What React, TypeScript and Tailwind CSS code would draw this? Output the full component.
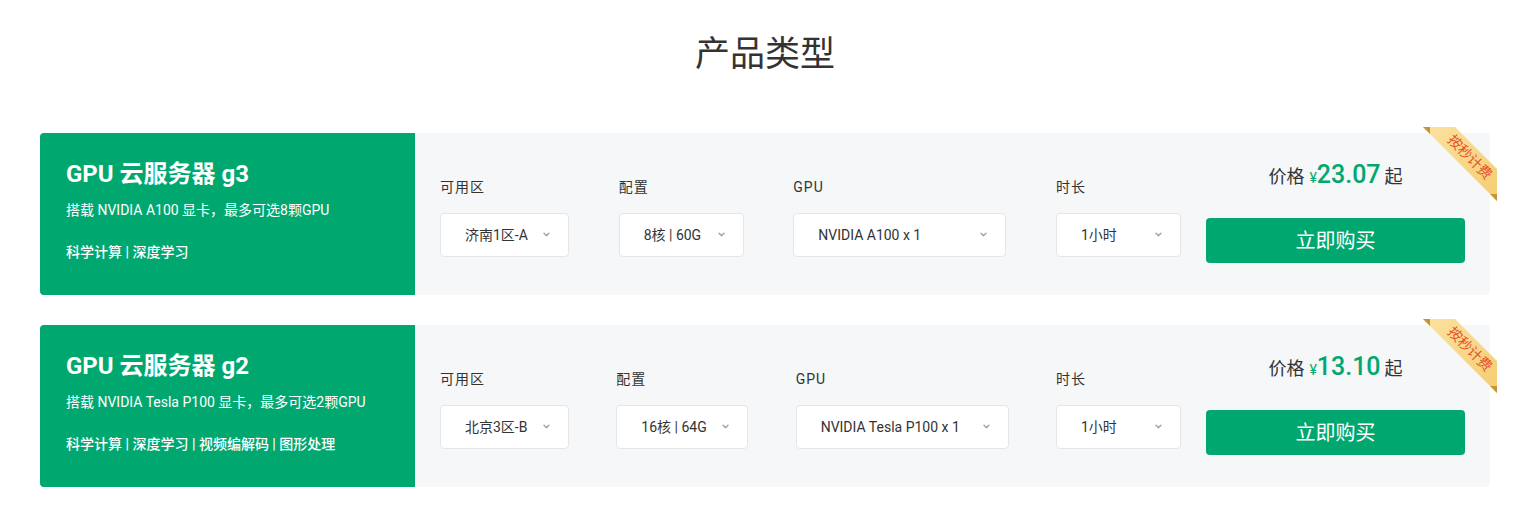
import React from "react";

type Field = { label: string; value: string; width: number };

type Product = {
  name: string;
  desc: string;
  tags: string;
  price: string;
  fields: Field[];
};

const products: Product[] = [
  {
    name: "GPU 云服务器 g3",
    desc: "搭载 NVIDIA A100 显卡，最多可选8颗GPU",
    tags: "科学计算 | 深度学习",
    price: "23.07",
    fields: [
      { label: "可用区", value: "济南1区-A", width: 129 },
      { label: "配置", value: "8核 | 60G", width: 125 },
      { label: "GPU", value: "NVIDIA A100 x 1", width: 213 },
      { label: "时长", value: "1小时", width: 125 },
    ],
  },
  {
    name: "GPU 云服务器 g2",
    desc: "搭载 NVIDIA Tesla P100 显卡，最多可选2颗GPU",
    tags: "科学计算 | 深度学习 | 视频编解码 | 图形处理",
    price: "13.10",
    fields: [
      { label: "可用区", value: "北京3区-B", width: 129 },
      { label: "配置", value: "16核 | 64G", width: 132 },
      { label: "GPU", value: "NVIDIA Tesla P100 x 1", width: 213 },
      { label: "时长", value: "1小时", width: 125 },
    ],
  },
];

function Chevron() {
  return (
    <svg width="7" height="5" viewBox="0 0 7 5" className="absolute right-[18px] top-[18px]">
      <path d="M1 1.2 L3.5 3.6 L6 1.2" fill="none" stroke="#a8a8a8" strokeWidth="1.5" strokeLinecap="round" strokeLinejoin="round" />
    </svg>
  );
}

function Ribbon() {
  return (
    <div className="absolute top-[-6px] right-[-7px] w-[74px] h-[74px] pointer-events-none">
      <svg width="74" height="74" viewBox="0 0 74 74" className="absolute inset-0">
        <defs>
          <linearGradient id="rb" x1="0" y1="0" x2="1" y2="1">
            <stop offset="0" stopColor="#fbe2a0" />
            <stop offset="1" stopColor="#f5cd72" />
          </linearGradient>
        </defs>
        <polygon points="0,0 32,0 74,42 74,74" fill="url(#rb)" />
        <polygon points="0,0 7,0 7,7" fill="#c3953a" />
        <polygon points="67,67 74,67 74,74" fill="#c3953a" />
      </svg>
      <span className="absolute left-[15px] top-[19px] w-[64px] h-[22px] rotate-45 flex items-center justify-center text-[14px] leading-none text-[#e5502a] whitespace-nowrap">
        按秒计费
      </span>
    </div>
  );
}

function ProductCard({ p }: { p: Product }) {
  return (
    <div className="relative flex h-[162px]">
      <div className="w-[375px] shrink-0 rounded-l-[4px] bg-[#00a870] pl-[26px] pt-[27px] text-white">
        <div className="text-[24px] font-bold leading-[28px]">{p.name}</div>
        <div className="mt-[12px] text-[14px] leading-[20px]">{p.desc}</div>
        <div className="mt-[22px] text-[14px] leading-[20px] font-medium">{p.tags}</div>
      </div>
      <div className="flex flex-1 rounded-r-[4px] bg-[#f5f7f8] px-[25px]">
        <div className="flex flex-1 justify-between pt-[44px]">
          {p.fields.map((f) => (
            <div key={f.label} style={{ width: f.width }}>
              <div className="text-[14px] leading-[20px] tracking-[1px] text-[#333]">{f.label}</div>
              <div className="relative mt-[16px] h-[44px] rounded-[4px] border border-[#e4e6e8] bg-white pl-[24px] text-[14px] leading-[42px] text-[#333] whitespace-nowrap">
                {f.value}
                <Chevron />
              </div>
            </div>
          ))}
        </div>
        <div className="ml-[25px] w-[259px] pt-[23px]">
          <div className="flex h-[28px] items-baseline justify-center text-[#333]">
            <span className="text-[18px]">价格</span>
            <span className="ml-[5px] text-[14px] text-[#00a870]">¥</span>
            <span className="text-[25px] font-medium text-[#00a870]">{p.price}</span>
            <span className="ml-[4px] text-[18px]">起</span>
          </div>
          <button className="mt-[34px] h-[45px] w-full rounded-[4px] bg-[#00a870] text-[20px] text-white">
            立即购买
          </button>
        </div>
      </div>
      <Ribbon />
    </div>
  );
}

export default function App() {
  return (
    <div className="min-h-[506px] bg-white font-['Roboto','Noto_Sans_CJK_SC',sans-serif]">
      <div className="ml-[40px] w-[1450px] pt-[31px]">
        <h2 className="text-center text-[35px] leading-[48px] text-[#333]">产品类型</h2>
        <div className="mt-[54px] flex flex-col gap-[30px]">
          {products.map((p) => (
            <ProductCard key={p.name} p={p} />
          ))}
        </div>
      </div>
    </div>
  );
}
